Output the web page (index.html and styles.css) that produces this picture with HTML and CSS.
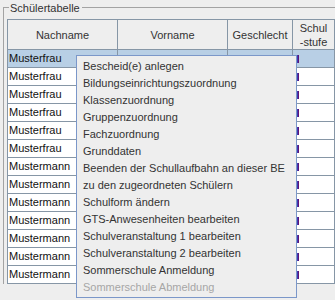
FILE: index.html
```html
<!DOCTYPE html>
<html lang="de">
<head>
    <meta charset="UTF-8">
    <title>Schülertabelle</title>
    <link rel="stylesheet" href="styles.css">
</head>
<body>
    <div class="panel">
        <span class="panel-title">Schülertabelle</span>
        <div class="scroll">
            <table class="grid">
                <thead>
                    <tr>
                        <th class="col-name">Nachname</th>
                        <th class="col-first">Vorname</th>
                        <th class="col-sex">Geschlecht</th>
                        <th class="col-level">Schul<br>-stufe</th>
                    </tr>
                </thead>
                <tbody>
                    <tr class="selected"><td>Musterfrau</td><td></td><td></td><td><span class="tick"></span></td></tr>
                    <tr><td>Musterfrau</td><td></td><td></td><td><span class="tick"></span></td></tr>
                    <tr><td>Musterfrau</td><td></td><td></td><td><span class="tick"></span></td></tr>
                    <tr><td>Musterfrau</td><td></td><td></td><td><span class="tick"></span></td></tr>
                    <tr><td>Musterfrau</td><td></td><td></td><td><span class="tick"></span></td></tr>
                    <tr><td>Musterfrau</td><td></td><td></td><td><span class="tick"></span></td></tr>
                    <tr><td>Mustermann</td><td></td><td></td><td><span class="tick"></span></td></tr>
                    <tr><td>Mustermann</td><td></td><td></td><td><span class="tick"></span></td></tr>
                    <tr><td>Mustermann</td><td></td><td></td><td><span class="tick"></span></td></tr>
                    <tr><td>Mustermann</td><td></td><td></td><td><span class="tick"></span></td></tr>
                    <tr><td>Mustermann</td><td></td><td></td><td><span class="tick"></span></td></tr>
                    <tr><td>Mustermann</td><td></td><td></td><td><span class="tick"></span></td></tr>
                    <tr><td>Mustermann</td><td></td><td></td><td><span class="tick"></span></td></tr>
                </tbody>
            </table>
        </div>
    </div>

    <ul class="popup">
        <li>Bescheid(e) anlegen</li>
        <li>Bildungseinrichtungszuordnung</li>
        <li>Klassenzuordnung</li>
        <li>Gruppenzuordnung</li>
        <li>Fachzuordnung</li>
        <li>Grunddaten</li>
        <li>Beenden der Schullaufbahn an dieser BE</li>
        <li>zu den zugeordneten Schülern</li>
        <li>Schulform ändern</li>
        <li>GTS-Anwesenheiten bearbeiten</li>
        <li>Schulveranstaltung 1 bearbeiten</li>
        <li>Schulveranstaltung 2 bearbeiten</li>
        <li>Sommerschule Anmeldung</li>
        <li class="disabled">Sommerschule Abmeldung</li>
    </ul>
</body>
</html>
```

FILE: styles.css
```css
body {
    margin: 0;
    padding: 0;
    height: 300px;
    overflow: hidden;
    position: relative;
    background-color: #eeeeee;
    font-family: 'Liberation Sans', Arial, sans-serif;
    font-size: 11px;
    color: #111;
}

.panel {
    position: relative;
    width: 360px;
    margin: 7px 0 0 3px;
    padding: 11px 0 0 3px;
    border-top: 1px solid #a3a3a3;
    border-left: 1px solid #a3a3a3;
}

.panel-title {
    position: absolute;
    top: -7px;
    left: 5px;
    padding: 0 2px 0 1px;
    line-height: 14px;
    color: #333;
    background-color: #eeeeee;
}

.scroll {
    border-top: 1px solid #8696a6;
    border-left: 1px solid #8696a6;
}

.grid {
    border-collapse: separate;
    border-spacing: 0;
    table-layout: fixed;
    width: 327px;
}

.grid th,
.grid td {
    padding: 0;
    border-right: 1px solid #8696a6;
    border-bottom: 1px solid #8696a6;
    white-space: nowrap;
    overflow: hidden;
}

.grid th {
    height: 29px;
    line-height: 14px;
    font-weight: normal;
    color: #333;
    text-align: center;
    background-color: #eeeeee;
}

.col-name { width: 109px; }
.col-first { width: 109px; }
.col-sex { width: 64px; }
.col-level { width: 41px; }

.grid td {
    height: 17px;
    line-height: 17px;
    padding-left: 1px;
    background-color: #fff;
}

.grid tr.selected td {
    background-color: #b8cfe5;
}

.tick {
    display: block;
    width: 2px;
    height: 8px;
    margin-left: 3px;
    background: linear-gradient(to right, #3c3cb4 50%, #5e1478 50%);
}

.popup {
    position: absolute;
    top: 55px;
    left: 76px;
    width: 219px;
    margin: 0;
    padding: 2px 0 1px;
    list-style: none;
    border: 1px solid #7b97c9;
    background-color: #eeeeee;
}

.popup li {
    height: 17px;
    line-height: 17px;
    padding-left: 6px;
    color: #333;
    white-space: nowrap;
}

.popup li.disabled {
    color: #a6a6a6;
}
```
